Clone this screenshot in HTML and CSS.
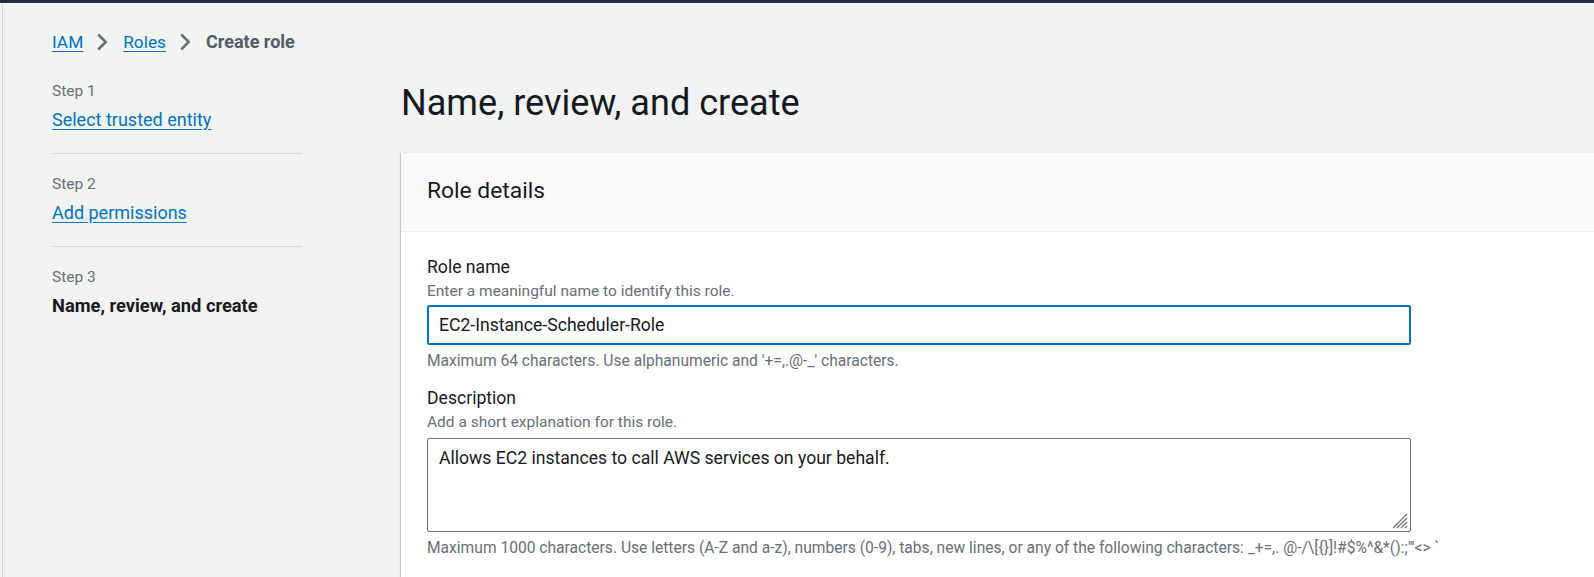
FILE: index.html
```html
<!DOCTYPE html>
<html lang="en">
<head>
<meta charset="utf-8">
<title>Create role</title>
<link rel="stylesheet" href="styles.css">
</head>
<body>
<div class="topbar"></div>
<div class="page">
  <nav class="breadcrumb">
    <a href="#" class="crumb-link">IAM</a>
    <svg class="chev" viewBox="0 0 16 16" width="20" height="20"><path d="M5 2l6 6-6 6" fill="none" stroke="#687078" stroke-width="2"/></svg>
    <a href="#" class="crumb-link">Roles</a>
    <svg class="chev" viewBox="0 0 16 16" width="20" height="20"><path d="M5 2l6 6-6 6" fill="none" stroke="#687078" stroke-width="2"/></svg>
    <span class="crumb-current">Create role</span>
  </nav>
  <div class="layout">
    <ol class="steps">
      <li class="step">
        <div class="step-label">Step 1</div>
        <a href="#" class="step-link">Select trusted entity</a>
      </li>
      <li class="step">
        <div class="step-label">Step 2</div>
        <a href="#" class="step-link">Add permissions</a>
      </li>
      <li class="step step-last">
        <div class="step-label">Step 3</div>
        <div class="step-current">Name, review, and create</div>
      </li>
    </ol>
    <main class="main">
      <h1 class="title">Name, review, and create</h1>
      <section class="panel">
        <header class="panel-header"><h2 class="panel-title">Role details</h2></header>
        <div class="panel-body">
          <div class="field">
            <label class="field-label" for="rolename">Role name</label>
            <div class="field-desc">Enter a meaningful name to identify this role.</div>
            <input id="rolename" class="field-input" type="text" value="EC2-Instance-Scheduler-Role">
            <div class="field-constraint">Maximum 64 characters. Use alphanumeric and '+=,.@-_' characters.</div>
          </div>
          <div class="field field-spaced">
            <label class="field-label" for="desc">Description</label>
            <div class="field-desc">Add a short explanation for this role.</div>
            <div class="textarea-wrap">
              <textarea id="desc" class="field-textarea">Allows EC2 instances to call AWS services on your behalf.</textarea>
              <svg class="grip" viewBox="0 0 16 16" width="16" height="16"><path d="M15 1L1 15M15 5L5 15M15 9L9 15M15 13L13 15" fill="none" stroke="#6b737c" stroke-width="1.2"/></svg>
            </div>
            <div class="field-constraint">Maximum 1000 characters. Use letters (A-Z and a-z), numbers (0-9), tabs, new lines, or any of the following characters: _+=,. @-/\[{}]!#$%^&amp;*():;"'&lt;&gt; `</div>
          </div>
        </div>
      </section>
    </main>
  </div>
</div>
</body>
</html>
```
FILE: styles.css
```css
html, body {
  margin: 0;
  height: 100%;
}
body {
  font-family: Roboto, "Noto Sans", sans-serif;
  font-size: 17.5px;
  color: #16191f;
  background: #f2f3f3;
  overflow: hidden;
}
.topbar {
  height: 3px;
  background: #232f3e;
}
.page {
  margin-left: 2px;
  border-left: 1px solid #d1d5d5;
  padding: 28px 0 0 49px;
  height: calc(100% - 3px);
  box-sizing: border-box;
  overflow: hidden;
}
.breadcrumb {
  display: flex;
  align-items: center;
  height: 22px;
  line-height: 22px;
}
.crumb-link {
  color: #0073bb;
  font-size: 17.3px;
  text-decoration: underline;
  text-underline-offset: 3px;
}
.chev {
  margin: 0 11px 0 9px;
  flex: none;
}
.crumb-current {
  color: #545b64;
  font-weight: 700;
  font-size: 18px;
}
.layout {
  display: flex;
  margin-top: 28px;
}
.steps {
  list-style: none;
  margin: 0;
  padding: 0;
  width: 250px;
  flex: none;
}
.step {
  padding: 20px 0 22px;
  border-bottom: 1px solid #d5dbdb;
  display: flex;
  flex-direction: column;
  align-items: flex-start;
}
.step:first-child {
  padding-top: 0;
}
.step-last {
  border-bottom: none;
}
.step-label {
  color: #687078;
  font-size: 15.5px;
  line-height: 20px;
}
.step-link {
  margin-top: 8px;
  color: #0073bb;
  font-size: 18px;
  line-height: 22px;
  text-decoration: underline;
  text-underline-offset: 3px;
}
.step-current {
  margin-top: 8px;
  font-weight: 700;
  font-size: 18.3px;
  line-height: 22px;
}
.main {
  flex: 1;
  margin-left: 99px;
  min-width: 0;
}
.title {
  margin: 0 0 27px;
  font-size: 36.1px;
  line-height: 44px;
  font-weight: 400;
  color: #16191f;
}
.panel {
  background: #fff;
  border-top: 1px solid #eaeded;
  box-shadow: 0 1px 1px 0 rgba(0, 28, 36, 0.3), -1px 1px 1px 0 rgba(0, 28, 36, 0.15);
}
.panel-header {
  background: #fafafa;
  border-bottom: 1px solid #eaeded;
  padding: 24px 26px 26px;
}
.panel-title {
  margin: 0;
  font-size: 22.8px;
  line-height: 28px;
  font-weight: 400;
}
.panel-body {
  padding: 24px 26px 40px;
}
.field {
  display: flex;
  flex-direction: column;
  align-items: flex-start;
}
.field-spaced {
  margin-top: 16px;
}
.field-label {
  font-size: 17.6px;
  line-height: 22px;
}
.field-desc {
  margin-top: 3px;
  color: #687078;
  font-size: 15.5px;
  line-height: 20px;
}
.field-input {
  margin-top: 4px;
  width: 984px;
  height: 40px;
  box-sizing: border-box;
  border: 2px solid #0073bb;
  border-radius: 2px;
  padding: 0 10px;
  font-family: Roboto, "Noto Sans", sans-serif;
  font-size: 17.6px;
  color: #16191f;
  background: #fff;
  outline: none;
}
.textarea-wrap {
  position: relative;
  margin-top: 6px;
  width: 984px;
  height: 94px;
}
.field-textarea {
  display: block;
  width: 100%;
  height: 100%;
  box-sizing: border-box;
  border: 1px solid #687078;
  border-radius: 2px;
  padding: 8px 11px;
  font-family: Roboto, "Noto Sans", sans-serif;
  font-size: 17.6px;
  line-height: 22px;
  color: #16191f;
  background: #fff;
  outline: none;
  resize: none;
}
.grip {
  position: absolute;
  right: 3px;
  bottom: 3px;
}
.field-constraint {
  margin-top: 6px;
  color: #687078;
  font-size: 15.6px;
  line-height: 20px;
  white-space: nowrap;
}
```
